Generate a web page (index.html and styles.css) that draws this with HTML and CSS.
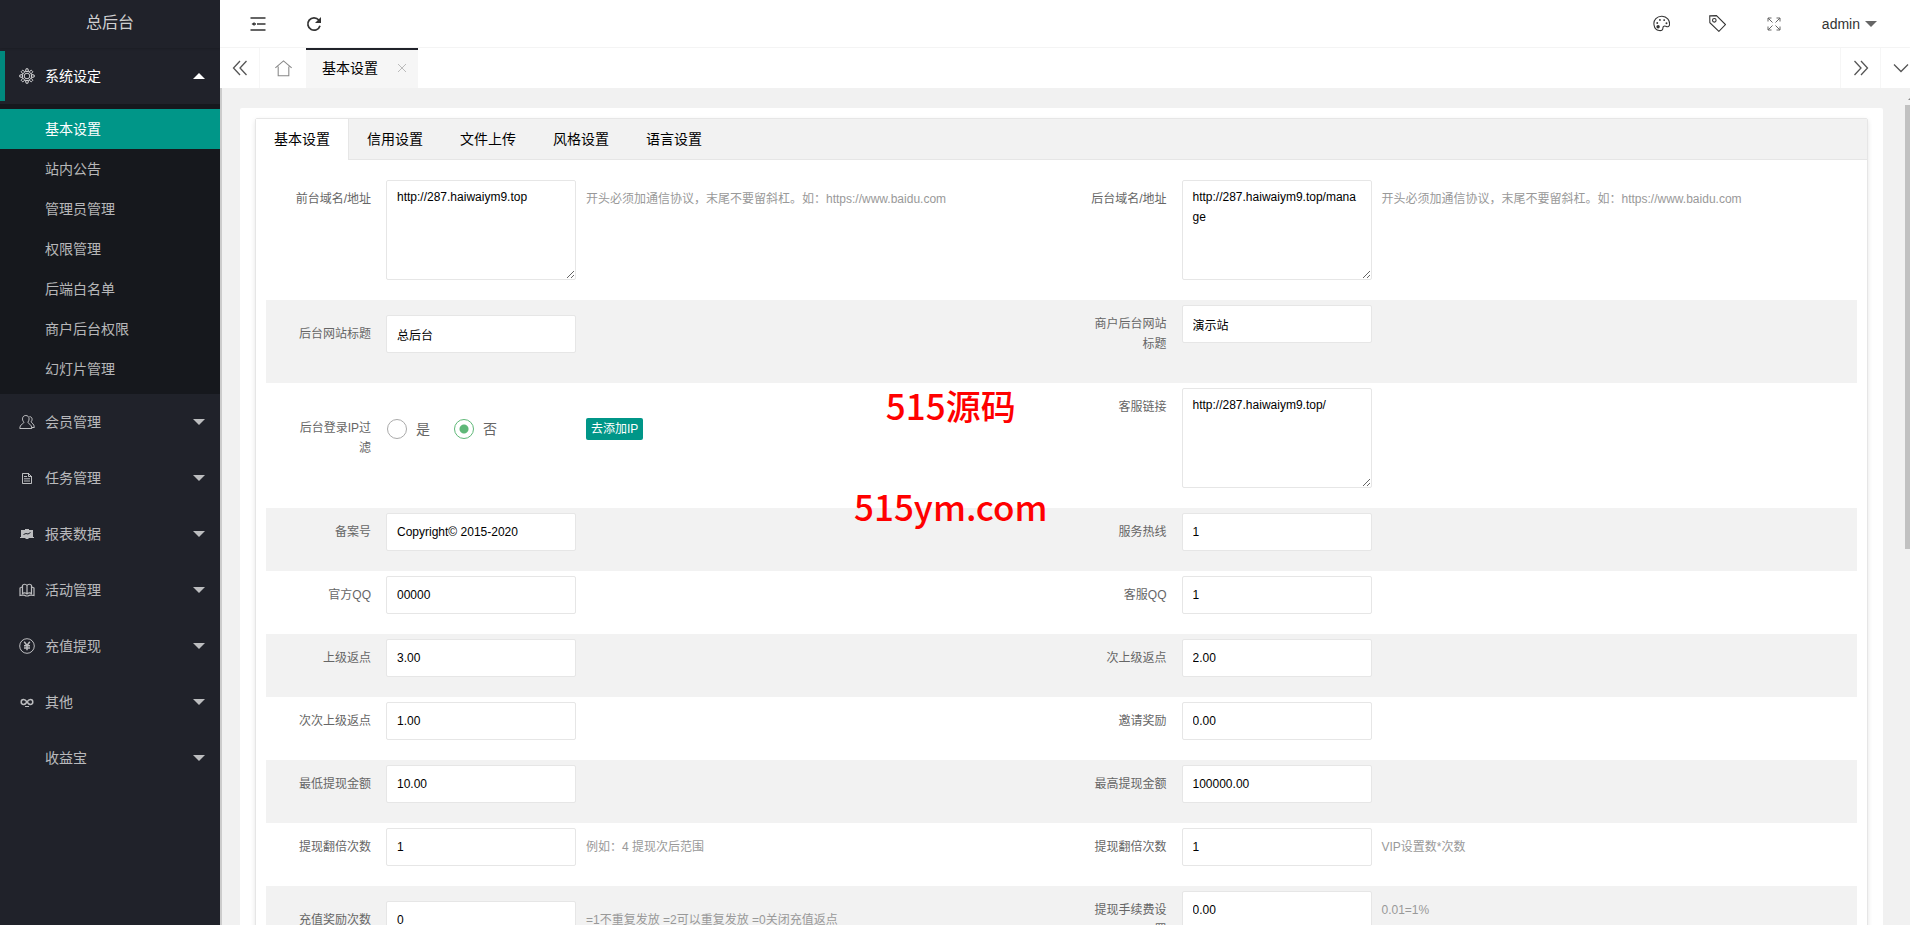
FILE: index.html
```html
<!DOCTYPE html>
<html lang="zh-CN">
<head>
<meta charset="utf-8">
<title>总后台</title>
<link rel="stylesheet" href="styles.css">
</head>
<body>
<div class="app">
  <aside class="side">
    <div class="logo">总后台</div>
    <nav class="menu">
      <button type="button" class="menu-item is-open">
        <svg class="menu-icon" viewBox="0 0 16 16"><circle cx="8" cy="8" r="2.8"/><path d="M6.700 3 7 .8h2L9.300 3l1.200.5 1.800-1.300 1.500 1.500-1.300 1.800.5 1.200 2.200.3v2l-2.200.3-.5 1.200 1.300 1.800-1.500 1.500-1.800-1.300-1.200.5L9 15.200H7L6.700 13l-1.200-.5-1.800 1.300-1.500-1.500 1.300-1.800L3 9.300.8 9V7L3 6.700l.5-1.200-1.300-1.800 1.500-1.500 1.800 1.300z"/><circle cx="8" cy="8" r="4.600"/></svg>
        <span>系统设定</span><i class="caret up"></i>
      </button>
      <div class="submenu">
        <a href="#" class="is-current">基本设置</a>
        <a href="#">站内公告</a>
        <a href="#">管理员管理</a>
        <a href="#">权限管理</a>
        <a href="#">后端白名单</a>
        <a href="#">商户后台权限</a>
        <a href="#">幻灯片管理</a>
      </div>
      <button type="button" class="menu-item">
        <svg class="menu-icon" viewBox="0 0 16 16"><path d="M6.800 1.500c2 0 3.300 1.400 3.300 3.400 0 1.500-.6 2.600-1.300 3.300.3 1.500 4 2 4 6.300H.8c0-4.300 4-4.800 4.200-6.300-.8-.7-1.500-1.800-1.500-3.300 0-2 1.300-3.400 3.300-3.400zM10.500 2.500c1.700.3 2.600 1.300 2.600 2.800 0 1-.4 2-1 2.500.5 1.500 3.200 2 3.200 5.700h-2.500"/></svg>
        <span>会员管理</span><i class="caret"></i>
      </button>
      <button type="button" class="menu-item">
        <svg class="menu-icon" viewBox="0 0 16 16"><path d="M3.500 3.500h6l3 3v7h-9zM9.500 3.500v3h3M5 6.500h3M5 8.800h6M5 11h6"/></svg>
        <span>任务管理</span><i class="caret"></i>
      </button>
      <button type="button" class="menu-item">
        <svg class="menu-icon" viewBox="0 0 16 16"><path class="fill" d="M2 4h4V3h4v1h4v7h1v1H9.500v1h-3v-1H1v-1h1z"/><path class="cut" d="m4.500 8.500 2.500-1 2 .5 2.500-1.500"/></svg>
        <span>报表数据</span><i class="caret"></i>
      </button>
      <button type="button" class="menu-item">
        <svg class="menu-icon" viewBox="0 0 16 16"><path class="book" d="M8 3.500C7 1.800 4 1.800 3.500 3.500v8c1-.8 3.500-.8 4.500.5 1-1.300 3.500-1.300 4.500-.5v-8C12 1.800 9 1.800 8 3.500zM8 3.500V12M3 5 1 6v7.500c2-.5 5-.5 6 .5h2c1-1 4-1 6-.5V6l-2-1"/></svg>
        <span>活动管理</span><i class="caret"></i>
      </button>
      <button type="button" class="menu-item">
        <svg class="menu-icon" viewBox="0 0 16 16"><circle cx="8" cy="8" r="7.300"/><path class="bold" d="m5.200 3.800 2.800 3.700 2.800-3.700M8 7.500v4.700M5 7.800h6M5 10h6"/></svg>
        <span>充值提现</span><i class="caret"></i>
      </button>
      <button type="button" class="menu-item">
        <svg class="menu-icon" viewBox="0 0 16 16"><path class="bold" d="M8 8C7 6.500 6 5.600 4.600 5.600a2.400 2.400 0 0 0 0 4.800C6 10.400 7 9.500 8 8s2-2.400 3.400-2.400a2.400 2.400 0 0 1 0 4.800C10 10.400 9 9.500 8 8z"/><path d="M6 12.500h4"/></svg>
        <span>其他</span><i class="caret"></i>
      </button>
      <button type="button" class="menu-item">
        <svg class="menu-icon" viewBox="0 0 16 16"></svg>
        <span>收益宝</span><i class="caret"></i>
      </button>
    </nav>
  </aside>

  <div class="main">
    <header class="topbar">
      <button type="button" class="tool" aria-label="收起菜单">
        <svg viewBox="0 0 16 16"><path class="mid" d="M.5 2h15M7 8h8.500M.5 14h15"/><path class="solid" d="M1.500 8l3-2v4z"/><path class="mid" d="M4 8h2"/></svg>
      </button>
      <button type="button" class="tool" aria-label="刷新">
        <svg viewBox="0 0 16 16"><path class="mid" d="M12.800 4A6.200 6.200 0 1 0 14 9.700"/><path class="solid" d="M15 1v6H9z"/></svg>
      </button>
      <div class="topbar-right">
        <button type="button" class="tool" aria-label="主题">
          <svg class="big" viewBox="0 0 16 16"><path d="M1 9.500C0 4.500 4 1 8.500 1.200 13 1.400 16 5 15.600 9c-.2 2-1.800 2.500-3 1.800-1.600-.9-3.400-.3-3.300 1.500.1 2-1.600 2.600-3.500 2.300C3.200 14.200 1.400 12 1 9.500z"/><circle cx="4.800" cy="11" r="1.600" class="solid"/><circle cx="4" cy="7.500" r=".9" class="solid"/><circle cx="6.500" cy="4.600" r=".9" class="solid"/><circle cx="10.500" cy="4.800" r=".9" class="solid"/><circle cx="12.700" cy="7.800" r=".9" class="solid"/></svg>
        </button>
        <button type="button" class="tool" aria-label="便签">
          <svg class="big" viewBox="0 0 16 16"><path d="M.7.8 7 .6 15.500 9 9.300 15.400.8 7.200z"/><circle cx="5" cy="5" r="1.700"/></svg>
        </button>
        <button type="button" class="tool" aria-label="全屏">
          <svg class="grey" viewBox="0 0 16 16"><path d="M2 5.500V2h3.500M2 2l4.500 4.500M10.500 2H14v3.500M14 2 9.500 6.500M2 10.500V14h3.500M2 14l4.500-4.500M14 10.500V14h-3.500M14 14 9.500 9.500"/></svg>
        </button>
        <button type="button" class="user">admin<i class="caret"></i></button>
      </div>
    </header>

    <div class="tabbar">
      <button type="button" class="tab-ctl" aria-label="向左"><svg viewBox="0 0 16 16"><path d="M8 1 1.500 8 8 15M14.500 1 8 8l6.500 7"/></svg></button>
      <a href="#" class="tab-home" aria-label="主页"><svg viewBox="0 0 16 16"><path d="M.3 7.500 8 .8l7.700 6.700M3 6v8.800h10V6"/></svg></a>
      <div class="tab-page"><a href="#">基本设置</a><button type="button" aria-label="关闭"><svg viewBox="0 0 8 8"><path d="m0 0 8 8M8 0 0 8"/></svg></button></div>
      <div class="tab-end">
        <button type="button" class="tab-ctl" aria-label="向右"><svg viewBox="0 0 16 16"><path d="m1.500 1 6.500 7-6.500 7M8 1l6.500 7L8 15"/></svg></button>
        <button type="button" class="tab-ctl" aria-label="更多"><svg viewBox="0 0 16 16"><path d="m1 4.500 7 7 7-7"/></svg></button>
      </div>
    </div>

    <main class="content">
      <div class="card">
        <div class="panel">
          <div class="panel-tabs">
            <a href="#" class="is-current">基本设置</a>
            <a href="#">信用设置</a>
            <a href="#">文件上传</a>
            <a href="#">风格设置</a>
            <a href="#">语言设置</a>
          </div>
          <form class="rows">
            <div class="row">
              <div class="cell"><label for="f1">前台域名/地址</label><textarea id="f1">http://287.haiwaiym9.top</textarea><p class="hint">开头必须加通信协议，末尾不要留斜杠。如：https://www.baidu.com</p></div>
              <div class="cell"><label for="f2">后台域名/地址</label><textarea id="f2">http://287.haiwaiym9.top/manage</textarea><p class="hint">开头必须加通信协议，末尾不要留斜杠。如：https://www.baidu.com</p></div>
            </div>
            <div class="row">
              <div class="cell"><label for="f3">后台网站标题</label><input type="text" id="f3" value="总后台"></div>
              <div class="cell"><label for="f4">商户后台网站标题</label><input type="text" id="f4" value="演示站"></div>
            </div>
            <div class="row">
              <div class="cell" role="radiogroup" aria-labelledby="l5"><span class="label" id="l5">后台登录IP过滤</span>
                <div class="radios">
                  <label class="radio"><input type="radio" name="ip">是</label>
                  <label class="radio"><input type="radio" name="ip" checked>否</label>
                </div>
                <button type="button" class="btn">去添加IP</button>
              </div>
              <div class="cell"><label for="f6">客服链接</label><textarea id="f6">http://287.haiwaiym9.top/</textarea></div>
            </div>
            <div class="row">
              <div class="cell"><label for="f7">备案号</label><input type="text" id="f7" value="Copyright© 2015-2020"></div>
              <div class="cell"><label for="f8">服务热线</label><input type="text" id="f8" value="1"></div>
            </div>
            <div class="row">
              <div class="cell"><label for="f9">官方QQ</label><input type="text" id="f9" value="00000"></div>
              <div class="cell"><label for="f10">客服QQ</label><input type="text" id="f10" value="1"></div>
            </div>
            <div class="row">
              <div class="cell"><label for="f11">上级返点</label><input type="text" id="f11" value="3.00"></div>
              <div class="cell"><label for="f12">次上级返点</label><input type="text" id="f12" value="2.00"></div>
            </div>
            <div class="row">
              <div class="cell"><label for="f13">次次上级返点</label><input type="text" id="f13" value="1.00"></div>
              <div class="cell"><label for="f14">邀请奖励</label><input type="text" id="f14" value="0.00"></div>
            </div>
            <div class="row">
              <div class="cell"><label for="f15">最低提现金额</label><input type="text" id="f15" value="10.00"></div>
              <div class="cell"><label for="f16">最高提现金额</label><input type="text" id="f16" value="100000.00"></div>
            </div>
            <div class="row">
              <div class="cell"><label for="f17">提现翻倍次数</label><input type="text" id="f17" value="1"><p class="hint">例如：4 提现次后范围</p></div>
              <div class="cell"><label for="f18">提现翻倍次数</label><input type="text" id="f18" value="1"><p class="hint">VIP设置数*次数</p></div>
            </div>
            <div class="row">
              <div class="cell"><label for="f19">充值奖励次数</label><input type="text" id="f19" value="0"><p class="hint">=1不重复发放 =2可以重复发放 =0关闭充值返点</p></div>
              <div class="cell"><label for="f20">提现手续费设置</label><input type="text" id="f20" value="0.00"><p class="hint">0.01=1%</p></div>
            </div>
          </form>
        </div>
      </div>
      <div class="scrollbar"><i class="scroll-up"></i><i class="scroll-thumb"></i></div>
    </main>
  </div>

  <div class="watermark"><span>515源码</span><span>515ym.com</span></div>
</div>
</body>
</html>
```
FILE: styles.css
```css
* { box-sizing: border-box; }

body {
  margin: 0;
  font: 14px/24px "Liberation Sans", "Noto Sans CJK SC", sans-serif;
  color: #333;
  overflow: hidden;
}

a { color: inherit; text-decoration: none; }

button {
  font: inherit;
  color: inherit;
  background: none;
  border: 0;
  padding: 0;
  margin: 0;
}

p { margin: 0; }

svg { display: block; fill: none; stroke: currentColor; }
.solid { fill: currentColor; stroke: none; }
.mid { stroke-width: 1.7; }

.app { display: flex; height: 100vh; position: relative; }

.caret {
  border: 6px solid transparent;
  border-top-color: currentColor;
  border-bottom-width: 0;
}
.caret.up {
  border-top-width: 0;
  border-bottom: 6px solid #fff;
}

/* Sidebar */
.side {
  flex: 0 0 220px;
  background: #20222a;
  color: rgba(255, 255, 255, .7);
}
.logo {
  height: 48px;
  line-height: 46px;
  font-size: 16px;
  text-align: center;
  color: rgba(255, 255, 255, .8);
  box-shadow: 0 1px 2px rgba(0, 0, 0, .15);
}
.menu { display: flex; flex-direction: column; }
.menu-item {
  display: flex;
  align-items: center;
  height: 56px;
  padding: 0 15px 0 19px;
  text-align: left;
}
.menu-item span { flex: 1; }
.menu-item.is-open {
  color: #fff;
  background: linear-gradient(#00897d, #00897d) 0 3px / 5px 50px no-repeat;
}
.menu-icon { width: 16px; height: 16px; margin-right: 10px; }
.is-open .menu-icon { opacity: .8; }
.menu-icon .fill { fill: currentColor; stroke: none; }
.menu-icon .cut { stroke: #20222a; }
.menu-icon .bold { stroke-width: 1.5; }
.menu-icon .book { stroke-width: 1.2; }
.submenu {
  display: flex;
  flex-direction: column;
  padding: 5px 0;
  background: #16181d;
}
.submenu a { height: 40px; line-height: 40px; padding-left: 45px; }
.submenu .is-current { background: #009688; color: #fff; }

/* Top bar */
.main {
  flex: 1;
  min-width: 0;
  display: flex;
  flex-direction: column;
  overflow: hidden;
}
.topbar {
  flex: none;
  display: flex;
  align-items: center;
  height: 48px;
  padding: 0 33px 0 22px;
  border-bottom: 1px solid #f6f6f6;
  background: #fff;
}
.tool { width: 32px; height: 32px; margin-right: 24px; display: grid; place-items: center; }
.tool svg { width: 16px; height: 16px; }
.tool svg.big { width: 17px; height: 17px; }
.tool svg.grey { color: #666; }
.topbar-right { display: flex; align-items: center; margin-left: auto; }
.topbar-right .user { display: flex; align-items: center; gap: 5px; margin-left: 8px; }
.topbar-right .caret { color: #666; }

/* Page tabs */
.tabbar {
  flex: none;
  display: flex;
  height: 40px;
  background: #fff;
  box-shadow: 0 1px 2px rgba(0, 0, 0, .15);
  position: relative;
  color: #555;
}
.tab-ctl {
  width: 40px;
  border-right: 1px solid #f6f6f6;
  display: grid;
  place-items: center;
}
.tab-ctl svg { width: 16px; height: 16px; stroke-width: 1.3; }
.tab-home { width: 46px; display: grid; place-items: center; color: #888; }
.tab-home svg { width: 17px; height: 17px; }
.tab-page {
  display: flex;
  align-items: center;
  gap: 20px;
  padding: 0 12px 2px 16px;
  background: #f6f6f6;
  border-top: 2px solid #20222a;
  color: #000;
}
.tab-page button { color: #bbb; }
.tab-page svg { width: 8px; height: 8px; }
.tab-end { display: flex; margin: 0 -10px 0 auto; }
.tab-end .tab-ctl { border-right: 0; border-left: 1px solid #f6f6f6; }

/* Content */
.content {
  flex: 1;
  min-height: 0;
  padding: 20px 27px 0 18px;
  background: #f1f1f1;
  border-left: 2px solid #ccc;
  position: relative;
}
.card {
  height: 100%;
  padding: 10px 15px 0;
  background: #fff;
  border-radius: 2px 2px 0 0;
  overflow: hidden;
}
.panel {
  border: 1px solid #e6e6e6;
  border-radius: 2px;
  box-shadow: 0 2px 5px rgba(0, 0, 0, .1);
}
.panel-tabs {
  display: flex;
  height: 41px;
  background: #f2f2f2;
  border-bottom: 1px solid #e6e6e6;
  color: #000;
}
.panel-tabs a { height: 40px; line-height: 40px; padding: 0 18px; border-right: 1px solid transparent; }
.panel-tabs .is-current { height: 41px; background: #fff; border-right-color: #e6e6e6; }

.rows { padding: 15px 10px; font-size: 12px; line-height: 20px; }
.row { display: flex; align-items: center; }
.row:nth-child(even) { background: #f2f2f2; }
.cell { flex: 1; display: flex; align-items: flex-start; padding: 5px 10px 20px; }
.cell > label, .label {
  flex: none;
  width: 110px;
  padding: 9px 15px;
  text-align: right;
  color: #666;
}
.cell > input, .cell > textarea {
  flex: none;
  width: 190px;
  height: 38px;
  margin: 0;
  padding: 0 10px;
  border: 1px solid #e6e6e6;
  border-radius: 2px;
  background: #fff;
  color: #000;
  font: inherit;
}
.cell > textarea { height: 100px; padding: 6px 10px; overflow: hidden; }
.hint { padding: 9px 0 9px 10px; color: #999; }
.radios { display: flex; width: 200px; gap: 23px; padding: 9px 0; }
.radio { display: flex; align-items: center; gap: 9px; font-size: 14px; line-height: 22px; color: #666; }
.radio input {
  appearance: none;
  width: 20px;
  height: 20px;
  margin: 0 0 0 1px;
  border: 1px solid #aaa;
  border-radius: 50%;
}
.radio input:checked {
  border-color: #5fb878;
  background: radial-gradient(circle, #5fb878 4px, transparent 5px);
}
.btn {
  height: 22px;
  line-height: 22px;
  margin-top: 9px;
  padding: 0 5px;
  border-radius: 2px;
  background: #009688;
  color: #fff;
}

/* Page scrollbar, partly beyond the window edge */
.scrollbar { position: absolute; top: 0; right: 0; bottom: 0; width: 5px; background: #f1f1f1; overflow: hidden; }
.scroll-up { position: absolute; top: 8px; left: 3px; border: 4px solid transparent; border-top: 0; border-bottom-color: #888; }
.scroll-thumb { position: absolute; top: 17px; left: 0; width: 17px; height: 53%; background: #c1c1c1; }

.watermark {
  position: absolute;
  top: 378px;
  left: 854px;
  display: flex;
  flex-direction: column;
  align-items: center;
  gap: 47px;
  font: 500 35px/54px "Noto Sans CJK SC", sans-serif;
  color: #f00;
  pointer-events: none;
}
```
